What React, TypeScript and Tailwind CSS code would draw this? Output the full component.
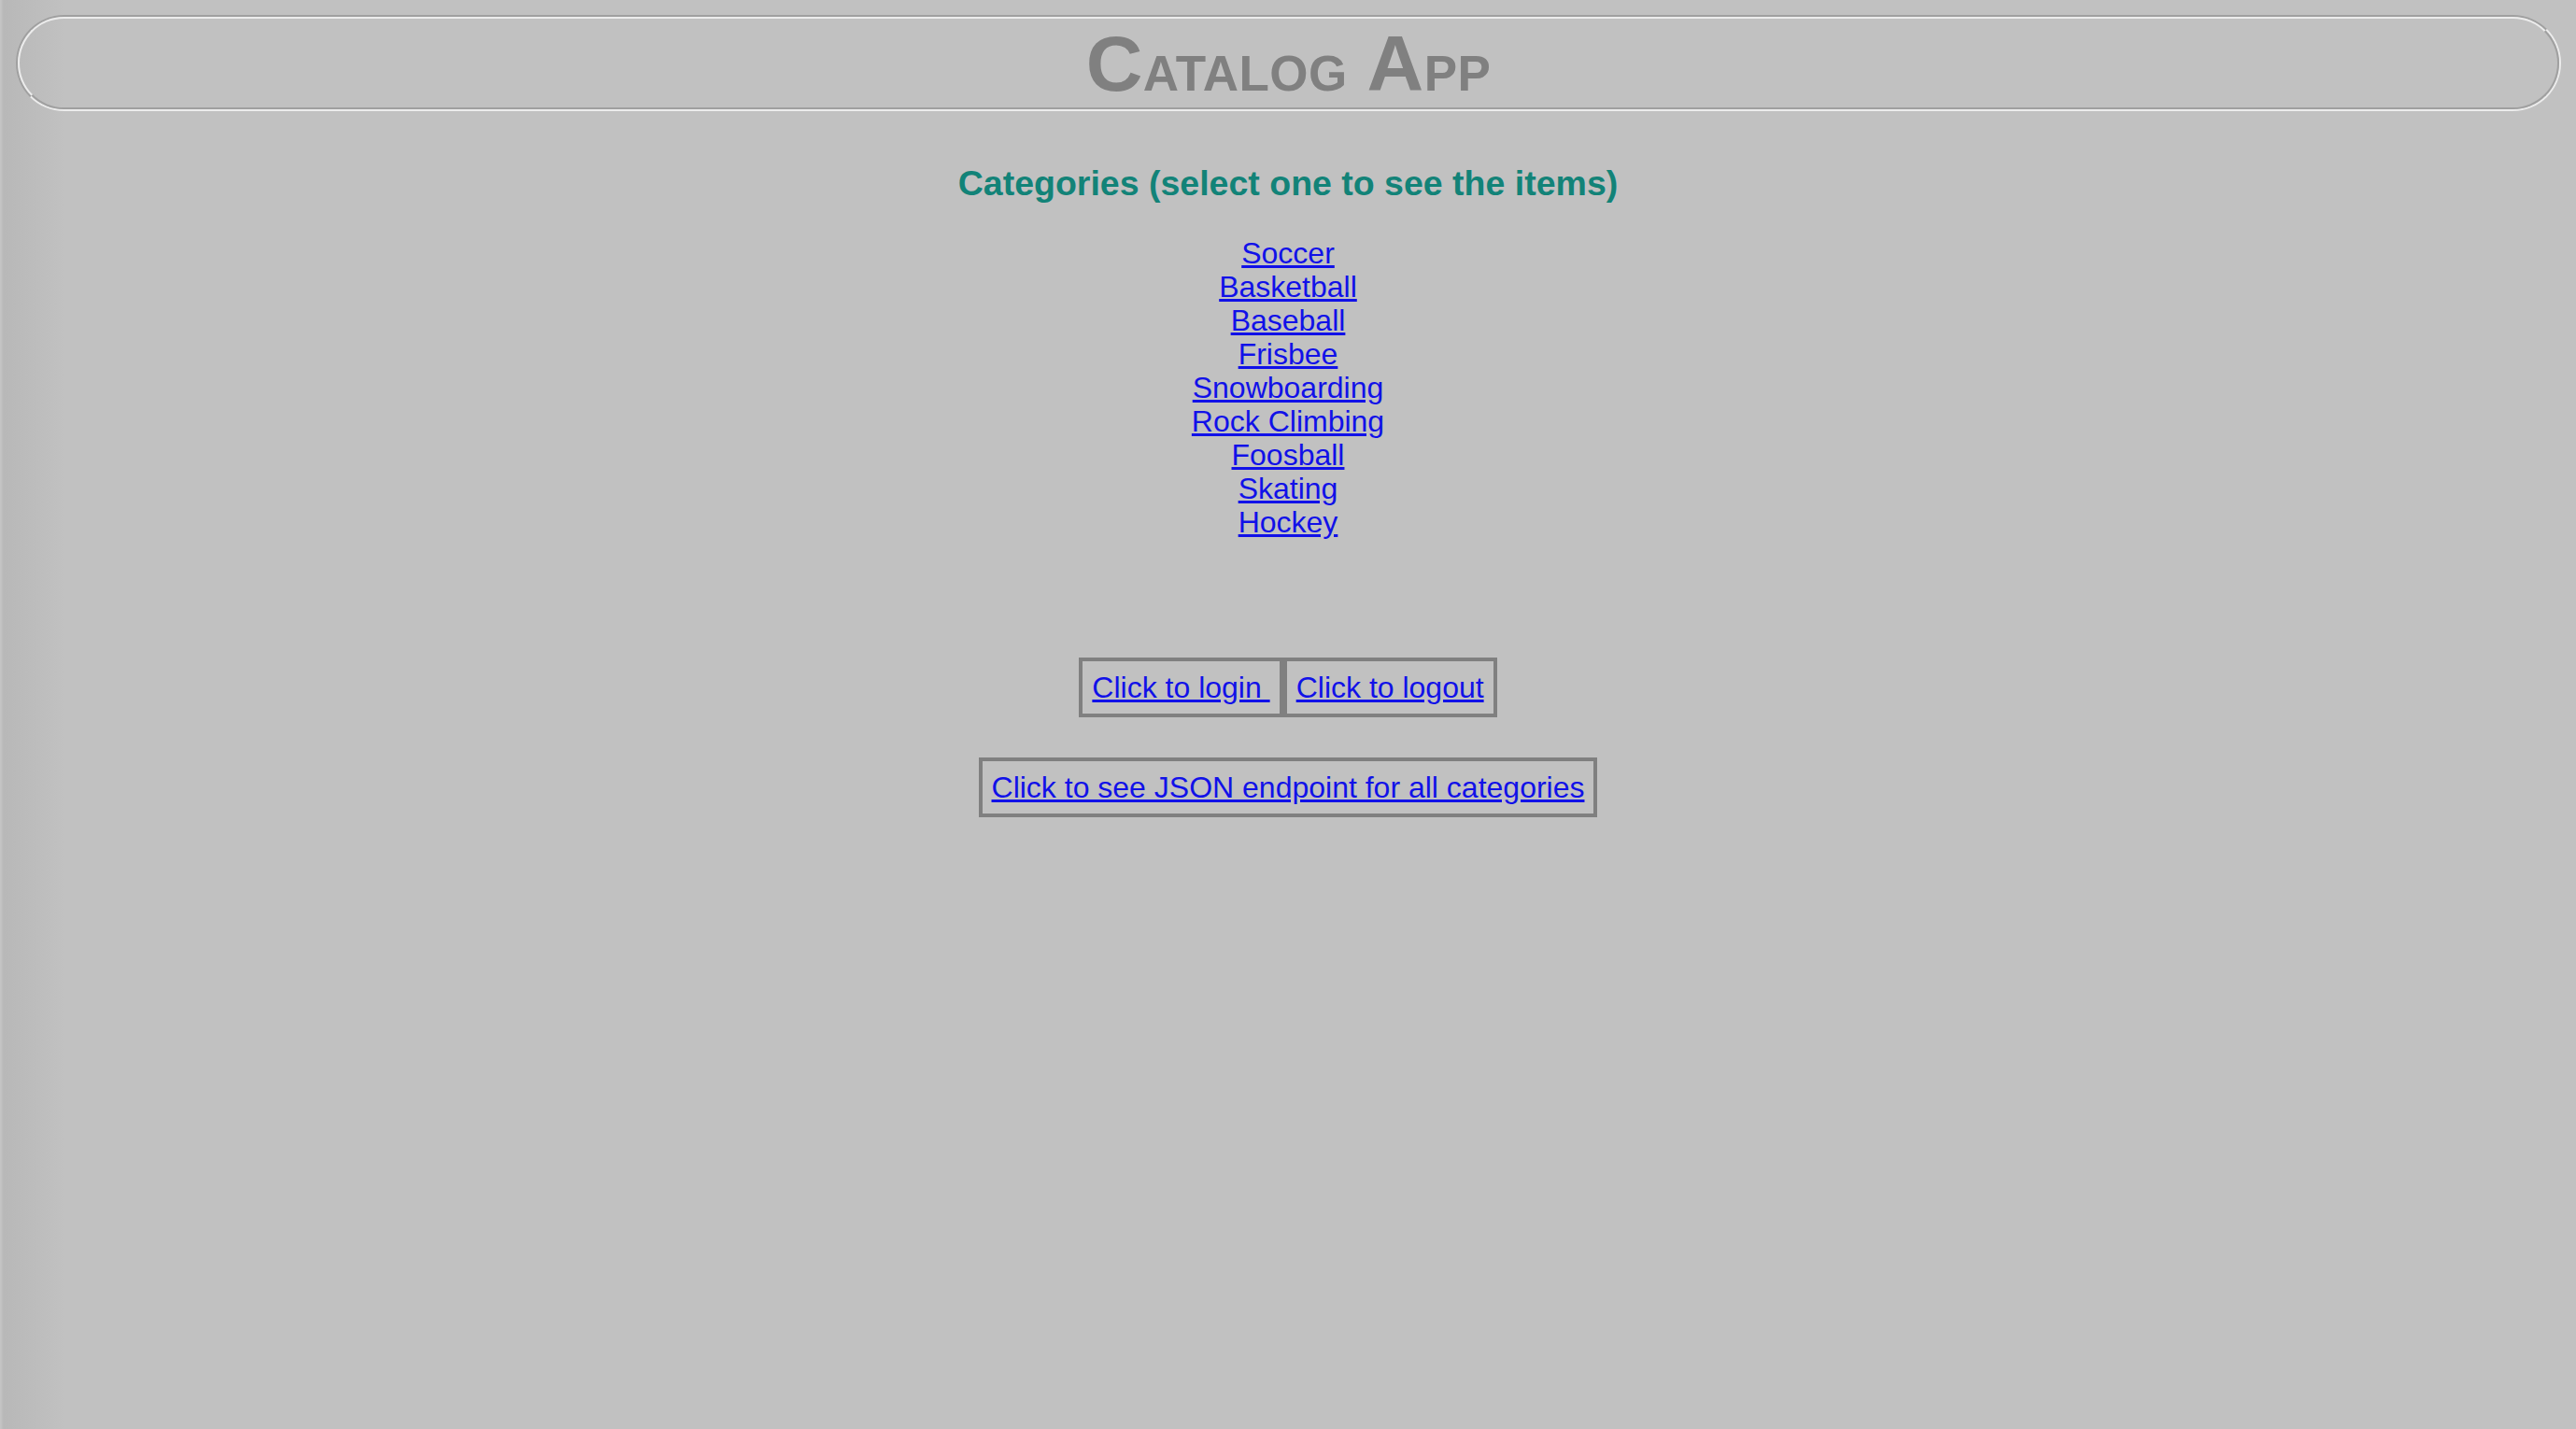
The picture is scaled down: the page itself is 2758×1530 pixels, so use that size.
const categories = [
  'Soccer',
  'Basketball',
  'Baseball',
  'Frisbee',
  'Snowboarding',
  'Rock Climbing',
  'Foosball',
  'Skating',
  'Hockey',
]

function BoxLink({ children }: { children: React.ReactNode }) {
  return (
    <div className="border-4 border-[#808080] px-[10px] py-[10px]">
      <a href="#" className="text-[#1111e8] underline decoration-[#1111e8] whitespace-pre">
        {children}
      </a>
    </div>
  )
}

export default function App() {
  return (
    <div className="min-h-screen w-full bg-[linear-gradient(to_right,#c6c6c6_0px,#b8b8b8_4px,#c1c1c1_70px)] pt-[16px] font-['Liberation_Sans',Arial,Helvetica,sans-serif]">
      <header className="ml-[17px] mr-[16px] h-[103px] rounded-full border-2 border-t-[#a0a0a0] border-l-[#a0a0a0] border-b-[#ececec] border-r-[#ececec]">
        <div className="flex h-full items-center justify-center rounded-full border-2 border-t-[#ececec] border-l-[#ececec] border-b-[#a0a0a0] border-r-[#a0a0a0]">
          <h1 className="text-[84px] leading-none font-bold tracking-[0.5px] text-[#808080]">
            C<span className="text-[53px]">ATALOG</span> A
            <span className="text-[53px]">PP</span>
          </h1>
        </div>
      </header>

      <main className="flex flex-col items-center">
        <h2 className="mt-[56px] text-[37.5px] leading-[42px] font-bold text-[#128378]">
          Categories (select one to see the items)
        </h2>

        <ul className="mt-[36px] flex flex-col items-center text-[32px] leading-[36px]">
          {categories.map(c => (
            <li key={c}>
              <a href="#" className="text-[#1111e8] underline decoration-[#1111e8]">
                {c}
              </a>
            </li>
          ))}
        </ul>

        <div className="mt-[127px] flex text-[32px] leading-[36px]">
          <BoxLink>{'Click to login '}</BoxLink>
          <BoxLink>Click to logout</BoxLink>
        </div>

        <div className="mt-[43px] text-[32px] leading-[36px]">
          <BoxLink>Click to see JSON endpoint for all categories</BoxLink>
        </div>
      </main>
    </div>
  )
}
